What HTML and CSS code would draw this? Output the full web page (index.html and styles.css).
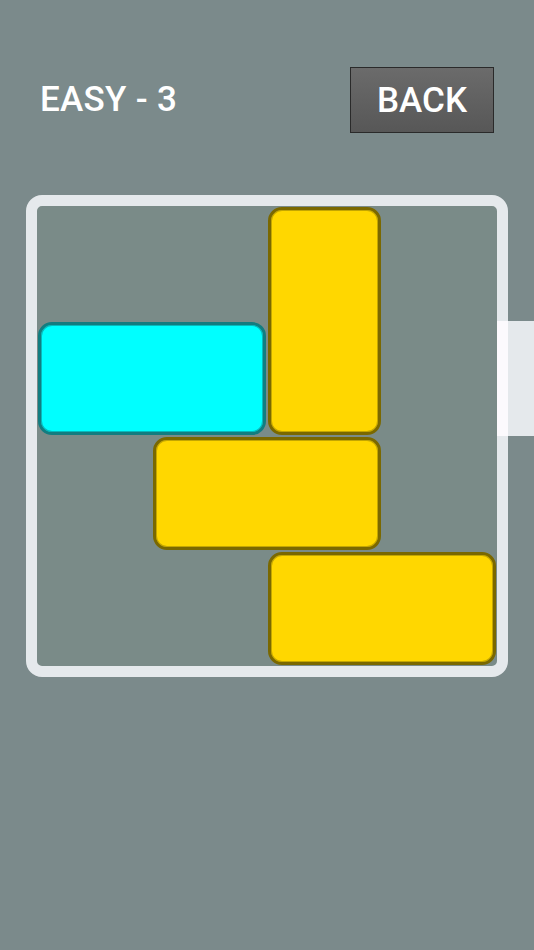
FILE: index.html
```html
<!DOCTYPE html>
<html>
<head>
<meta charset="utf-8">
<link rel="stylesheet" href="styles.css">
</head>
<body>
<div class="header">
  <div class="title">EASY - 3</div>
  <div class="back">BACK</div>
</div>
<div class="board">
  <div class="piece yellow p-v"></div>
  <div class="piece cyan p-c"></div>
  <div class="piece yellow p-h1"></div>
  <div class="piece yellow p-h2"></div>
  <div class="exit"></div>
</div>
</body>
</html>
```
FILE: styles.css
```css
html, body {
  margin: 0;
  padding: 0;
  background: #7b8a8b;
  font-family: Roboto, "Liberation Sans", sans-serif;
}
body {
  width: 534px;
  height: 950px;
  overflow: hidden;
}
.header {
  display: flex;
  justify-content: space-between;
  align-items: center;
  padding: 67px 40px 0 40px;
}
.title {
  color: #ffffff;
  font-size: 35px;
  font-weight: 500;
  letter-spacing: 0.3px;
  line-height: 40px;
}
.back {
  box-sizing: border-box;
  width: 144px;
  height: 66px;
  border: 1px solid #2a2a2a;
  background: linear-gradient(#6b6b6b, #575757);
  color: #ffffff;
  font-size: 35px;
  font-weight: 500;
  display: flex;
  align-items: center;
  justify-content: center;
}
.board {
  position: relative;
  margin: 62px 0 0 26px;
  width: 460px;
  height: 460px;
  border: 11px solid #e5e9ec;
  border-radius: 16px;
  background: #7a8b88;
  display: grid;
  grid-template-columns: repeat(4, 115px);
  grid-template-rows: repeat(4, 115px);
}
.piece {
  box-sizing: border-box;
  margin: 1px;
  border-radius: 14px;
  border: 3px solid;
}
.yellow {
  background: #ffd700;
  border-color: #7a6800;
  box-shadow: inset 0 0 0 1px #c4a600;
}
.cyan {
  background: #00ffff;
  border-color: #127d80;
  box-shadow: inset 0 0 0 1px #08b8bb;
}
.p-v { grid-column: 3 / 4; grid-row: 1 / 3; }
.p-c { grid-column: 1 / 3; grid-row: 2 / 3; }
.p-h1 { grid-column: 2 / 4; grid-row: 3 / 4; }
.p-h2 { grid-column: 3 / 5; grid-row: 4 / 5; }
.exit {
  position: absolute;
  left: 460px;
  top: 115px;
  width: 37px;
  height: 115px;
  background: linear-gradient(to right, #fcfafd 0, #fcfafd 11px, #e5e9ec 11px);
}
```
